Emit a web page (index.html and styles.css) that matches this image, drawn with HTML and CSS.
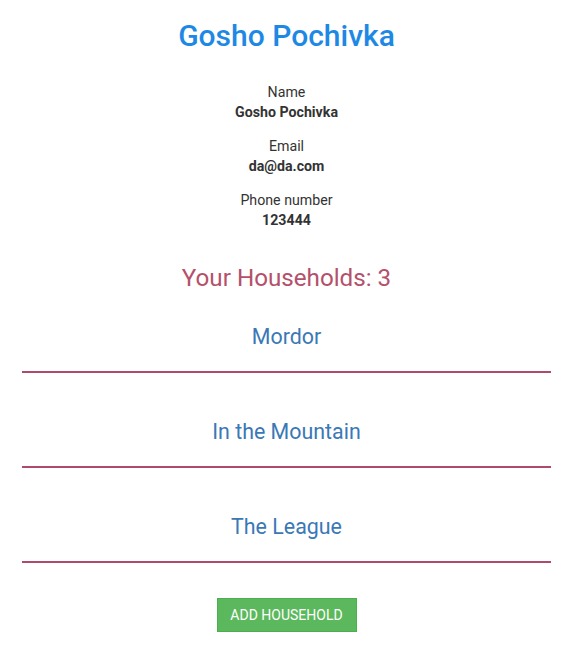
FILE: index.html
```html
<!DOCTYPE html>
<html>
<head>
<meta charset="utf-8">
<link rel="stylesheet" href="styles.css">
</head>
<body>
<div class="page">
  <h1 class="title">Gosho Pochivka</h1>
  <div class="info">
    <div class="field"><div class="label">Name</div><div class="value">Gosho Pochivka</div></div>
    <div class="field"><div class="label">Email</div><div class="value">da@da.com</div></div>
    <div class="field"><div class="label">Phone number</div><div class="value">123444</div></div>
  </div>
  <h2 class="households-title">Your Households: 3</h2>
  <ul class="households">
    <li class="household"><span class="household-name">Mordor</span></li>
    <li class="household"><span class="household-name">In the Mountain</span></li>
    <li class="household"><span class="household-name">The League</span></li>
  </ul>
  <div class="actions"><button class="btn-add">ADD HOUSEHOLD</button></div>
</div>
</body>
</html>
```
FILE: styles.css
```css
* { box-sizing: border-box; }
html, body { margin: 0; padding: 0; background: #fff; }
body { font-family: Roboto, "Noto Sans", sans-serif; color: #333; font-size: 14.2px; }
.page { padding: 18px 22px 0; display: flex; flex-direction: column; align-items: stretch; text-align: center; }
.title { margin: 0; font-size: 30px; line-height: 36px; font-weight: 500; color: #1e88e5; }
.info { margin-top: 28px; display: flex; flex-direction: column; gap: 14px; }
.field { line-height: 20px; }
.label { font-weight: 400; }
.value { font-weight: 700; }
.households-title { margin: 34px 0 0; font-size: 24.2px; line-height: 28px; font-weight: 400; color: #b5506b; }
.households { list-style: none; margin: 0; padding: 0; }
.household { padding: 46px 0 21px; border-bottom: 2px solid #b04a6a; }
.household:first-child { padding-top: 32px; }
.household-name { display: block; font-size: 21.4px; line-height: 26px; color: #3a78b6; }
.actions { margin-top: 35px; display: flex; justify-content: center; }
.btn-add { width: 140px; height: 34px; background: #5cb85c; border: 1px solid #4cae4c; color: #fff; font-family: Roboto, sans-serif; font-size: 14px; border-radius: 0; padding: 0; }
```
